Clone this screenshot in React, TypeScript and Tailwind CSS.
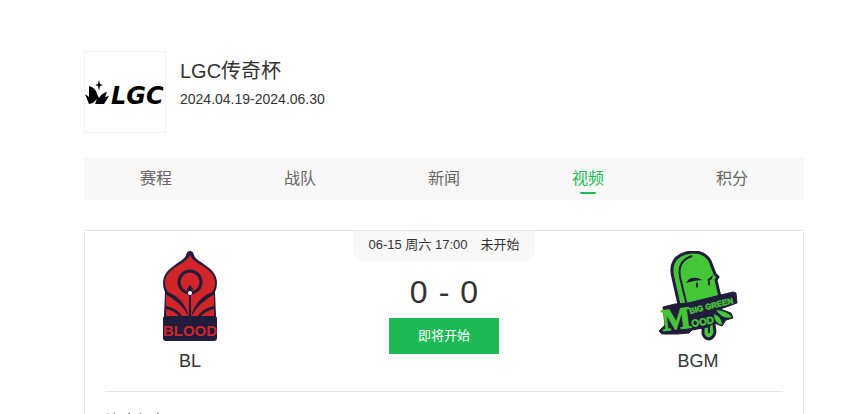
import React, { useState } from "react";

const tabs = ["赛程", "战队", "新闻", "视频", "积分"];

const LgcLogo = () => (
  <svg viewBox="0 0 80 80" className="block h-20 w-20" role="img" aria-label="LGC">
    <path
      d="M0 42 4 45 4 34Q11 36 12 42L14 46Q17 41 22 40L20 45 24 44 19 52H10L12 47 8 51 4 52Z"
      fill="#000"
    />
    <path d="M14 28 15 32 18 33 15 34 14 39 13 34 10 33 13 32Z" fill="#000" />
    <text
      x="26"
      y="52"
      fontSize="24"
      fontWeight="700"
      fontStyle="italic"
      fontFamily="'DejaVu Sans', sans-serif"
    >
      LGC
    </text>
  </svg>
);

const BloodLogo = () => (
  <svg viewBox="0 0 54 92" className="block h-[92px] w-[54px]" role="img" aria-label="Blood">
    <path
      d="M27 0Q30 0 31 4C32 8 37 10 42 14C50 19 54 25 54 32Q54 37 52 41L53 65 54 67V87Q54 90 51 90H3Q0 90 0 87V67L1 65 2 41Q0 37 0 32C0 25 4 19 12 14C17 10 22 8 23 4Q24 0 27 0Z"
      fill="#211c3b"
    />
    <path
      d="M27 3C28 9 36 12 41 16C48 20 52 25 52 32C52 37 50 39 49 41L51 42V65H3V42L5 41C4 39 2 37 2 32C2 25 6 20 13 16C18 12 26 9 27 3Z"
      fill="#d12529"
    />
    <circle cx="27" cy="31" r="11" fill="none" stroke="#211c3b" strokeWidth="3" />
    <path d="M27 34 30 38 28 44V66H26V44L24 38Z" fill="#211c3b" />
    <path
      d="M2 40Q21 46 26 66 18 51 2 43ZM52 40Q33 46 28 66 36 51 52 43ZM3 55Q14 57 20 66H17Q12 60 3 58ZM51 55Q40 57 34 66H37Q42 60 51 58Z"
      fill="#211c3b"
    />
    <circle cx="27" cy="42" r="2" fill="#fff" />
    <text
      x="27"
      y="85"
      fontSize="15"
      fontWeight="700"
      textAnchor="middle"
      fill="#d12529"
      fontFamily="'Liberation Sans', sans-serif"
    >
      BLOOD
    </text>
  </svg>
);

const BigGreenLogo = () => (
  <svg viewBox="0 0 80 92" className="block h-[92px] w-20" role="img" aria-label="Big Green Mood">
    <g stroke="#211c3b" strokeLinejoin="round">
      <path d="M45 68V83Q47 88 51 88 56 87 57 81L55 66Z" fill="#45c636" strokeWidth="3" />
      <path d="M51 72V82" strokeWidth="2" />
      <path
        d="M22 58 15 27Q10 7 28 2Q45-2 52 10L57 23 60 26 58 29 63 50Z"
        fill="#45c636"
        strokeWidth="3"
      />
      <path d="M29 55 22 26Q19 10 34 5" fill="none" strokeWidth="2" />
    </g>
    <path d="M28 32 31 28Q38 25 44 29L36 30ZM49 29 55 24 54 28 50 30Z" fill="#211c3b" />
    <ellipse cx="39" cy="34" rx="1" ry="3" fill="#211c3b" />
    <ellipse cx="51" cy="32" rx="1" ry="3" fill="#211c3b" />
    <path
      d="M5 56 17 53 30 52 75 41 78 42 79 52 68 56 62 58 73 62 75 67 68 69 64 75 56 72 50 76 34 79 31 82 20 83 4 83 1 80 7 74Z"
      fill="#211c3b"
      stroke="#211c3b"
      strokeWidth="1"
      strokeLinejoin="round"
    />
    <path d="M58 59Q69 60 74 66Q65 69 58 59ZM56 63Q64 66 64 74Q56 72 56 63Z" fill="#45c636" />
    <g fill="#45c636" stroke="#45c636" fontWeight="700">
      <text
        x="5"
        y="80"
        fontSize="31"
        strokeWidth="1"
        fontFamily="'Liberation Serif', serif"
        transform="rotate(-7 5 80)"
      >
        M
      </text>
      <text
        x="32"
        y="63"
        fontSize="8"
        strokeWidth="0.5"
        fontFamily="'Liberation Sans', sans-serif"
        transform="rotate(-14 32 63)"
      >
        BIG GREEN
      </text>
      <text
        x="34"
        y="76"
        fontSize="10"
        strokeWidth="0.5"
        fontFamily="'Liberation Sans', sans-serif"
        transform="rotate(-10 34 76)"
      >
        OOD
      </text>
    </g>
  </svg>
);

const Team = ({ name, children }: { name: string; children: React.ReactNode }) => (
  <div className="flex w-[170px] flex-col items-center pt-5">
    {children}
    <p className="mt-1 text-lg leading-7">{name}</p>
  </div>
);

const App = () => {
  const [active, setActive] = useState("视频");

  return (
    <div className="h-screen overflow-hidden bg-white pl-[84px] pr-16 pt-[51px] font-['Liberation_Sans','Noto_Sans_CJK_SC',sans-serif] text-[#333]">
      <header className="flex">
        <div className="border border-[#f3f3f3]">
          <LgcLogo />
        </div>
        <div className="pl-[14px] pt-[5px]">
          <h1 className="text-xl leading-[30px]">LGC传奇杯</h1>
          <p className="text-sm leading-[26px]">2024.04.19-2024.06.30</p>
        </div>
      </header>

      <nav className="mt-[25px] flex bg-[#f8f8f8]">
        {tabs.map((tab) => (
          <button
            key={tab}
            onClick={() => setActive(tab)}
            className={`flex h-[42px] flex-1 cursor-pointer flex-col items-center text-base leading-[42px] ${
              active === tab ? "text-[#1cb955]" : "text-[#666]"
            }`}
          >
            <span className="h-[34px]">{tab}</span>
            {active === tab && <span className="h-[2px] w-4 rounded-sm bg-[#1cb955]" />}
          </button>
        ))}
      </nav>

      <section className="mt-[30px] border border-[#e4e4e4] px-5 pb-5">
        <div className="flex justify-between border-b border-[#e4e4e4] pb-4">
          <Team name="BL">
            <BloodLogo />
          </Team>
          <div className="flex flex-col items-center">
            <p className="h-[30px] whitespace-pre rounded-b-[10px] bg-[#f8f8f8] px-[15px] text-[13px] leading-7">
              06-15 周六 17:00{"\u3000"}未开始
            </p>
            <p className="flex gap-[11px] pt-2 text-[32px] leading-[46px]">
              <span>0</span>
              <span>-</span>
              <span>0</span>
            </p>
            <button className="mt-[3px] h-9 w-[110px] cursor-pointer bg-[#1cb955] text-[13px] text-white">
              即将开始
            </button>
          </div>
          <Team name="BGM">
            <BigGreenLogo />
          </Team>
        </div>
        <h2 className="mt-[18px] text-base leading-6">比赛视频</h2>
      </section>
    </div>
  );
};

export default App;
